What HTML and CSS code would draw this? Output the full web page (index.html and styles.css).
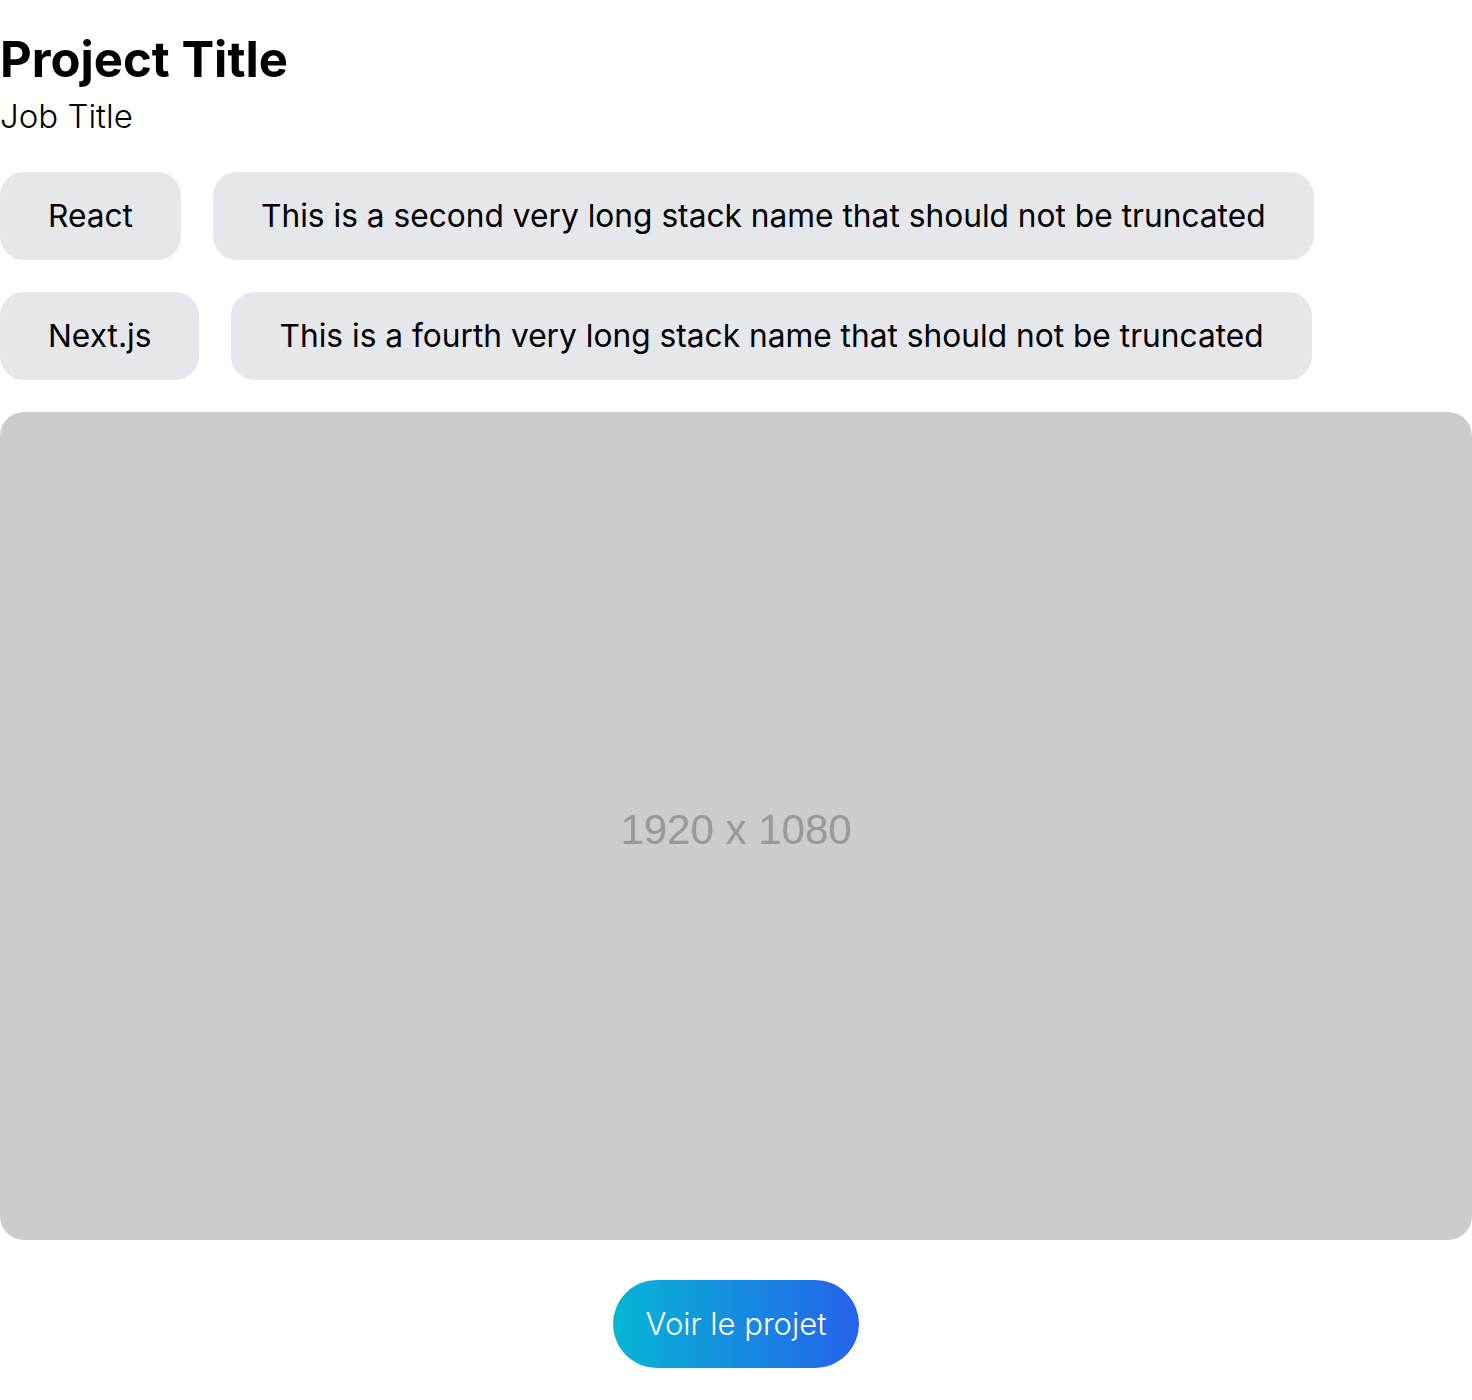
FILE: index.html
```html
<!DOCTYPE html>
<html lang="fr">
<head>
<meta charset="utf-8">
<title>Project</title>
<link rel="stylesheet" href="styles.css">
</head>
<body>
<main class="project">
  <header class="project-head">
    <h1 class="project-title">Project Title</h1>
    <p class="job-title">Job Title</p>
  </header>
  <ul class="stack-list">
    <li class="stack-tag">React</li>
    <li class="stack-tag">This is a second very long stack name that should not be truncated</li>
    <li class="stack-tag">Next.js</li>
    <li class="stack-tag">This is a fourth very long stack name that should not be truncated</li>
  </ul>
  <div class="preview"><span class="preview-label">1920 x 1080</span></div>
  <div class="actions">
    <a class="cta" href="#">Voir le projet</a>
  </div>
</main>
</body>
</html>
```
FILE: styles.css
```css
* { box-sizing: border-box; }
html, body { margin: 0; padding: 0; background: #fff; }
body { font-family: Inter, "Noto Sans", sans-serif; color: #000; }

.project { display: flex; flex-direction: column; width: 1472px; }

.project-head { padding-top: 30px; }
.project-title { margin: 0; font-size: 49px; line-height: 60px; font-weight: 700; }
.job-title { margin: 6px 0 0; font-size: 33px; line-height: 40px; font-weight: 300; }

.stack-list {
  list-style: none; margin: 36px 0 0; padding: 0;
  display: flex; flex-wrap: wrap; gap: 32px; width: 1340px;
}
.stack-tag {
  background: #e5e7eb; border-radius: 24px;
  padding: 24px 48px; font-size: 31.7px; line-height: 40px; font-weight: 400;
  white-space: nowrap;
}

.preview {
  margin-top: 32px; width: 1472px; height: 828px; border-radius: 24px;
  background: #cccccc; display: flex; align-items: center; justify-content: center;
}
.preview-label {
  font-family: "Liberation Sans", Arial, sans-serif; font-size: 42px; color: #999999;
  padding-top: 8px;
}

.actions { display: flex; justify-content: center; margin-top: 40px; }
.cta {
  display: inline-block; padding: 24px 33px; border-radius: 9999px;
  background: linear-gradient(to right, #06b6d4, #2563eb);
  color: #fff; text-decoration: none; font-size: 31px; line-height: 40px; font-weight: 300;
}
```
